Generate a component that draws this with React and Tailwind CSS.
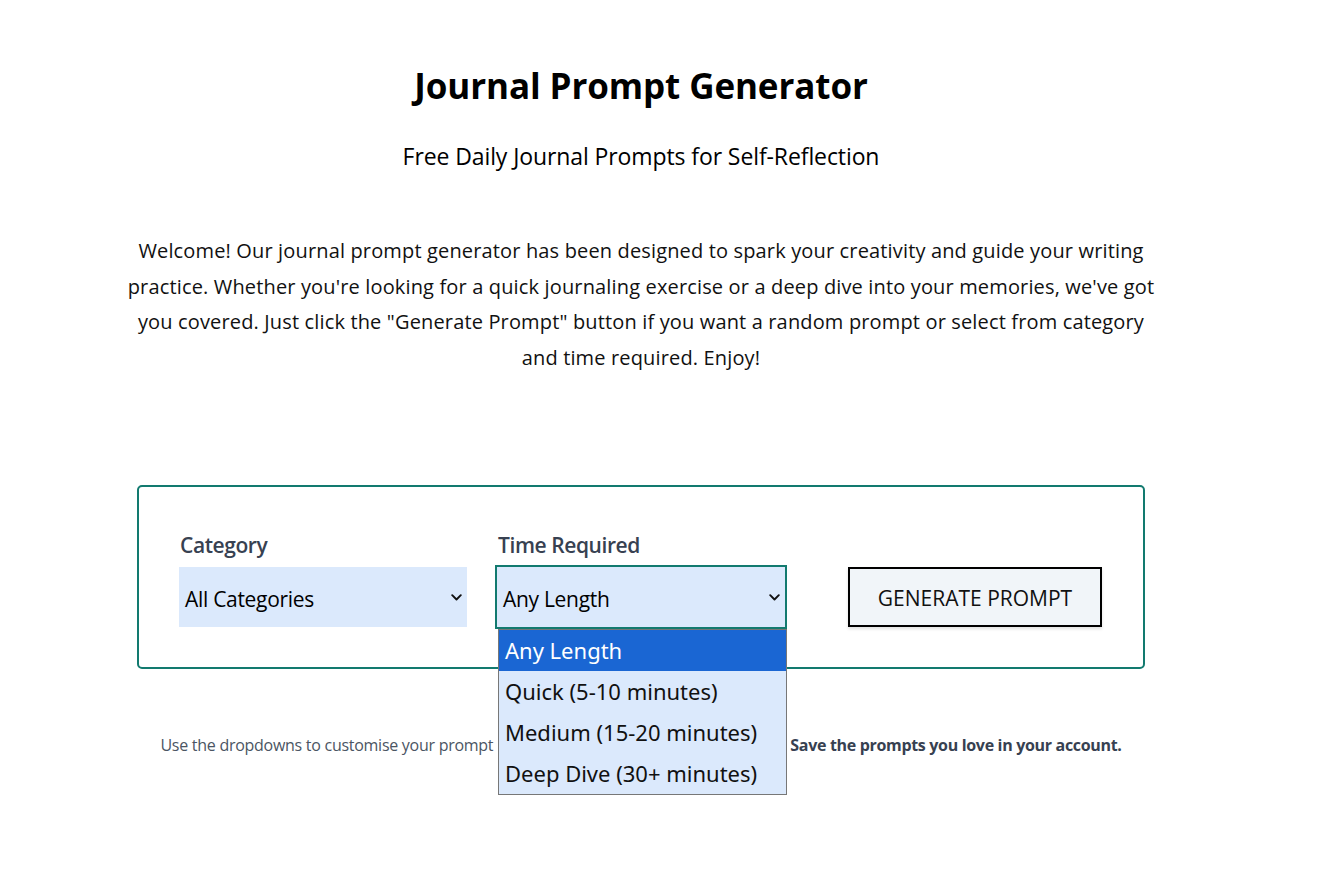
import React from "react";

function Chevron() {
  return (
    <svg width="11" height="7" viewBox="0 0 11 7" fill="none" className="shrink-0">
      <path d="M1.2 1.2 L5.5 5.5 L9.8 1.2" stroke="#111" strokeWidth="1.9" strokeLinecap="round" strokeLinejoin="round" />
    </svg>
  );
}

export default function App() {
  const options = ["Any Length", "Quick (5-10 minutes)", "Medium (15-20 minutes)", "Deep Dive (30+ minutes)"];
  return (
    <div className="min-h-screen bg-white text-black font-['Open_Sans',sans-serif]">
      <div className="w-[1050px] ml-[116px] flex flex-col items-center">
        <h1 className="mt-[62px] text-[35px] leading-[48px] font-bold tracking-[-0.1px]">Journal Prompt Generator</h1>
        <p className="mt-[31px] text-[23px] leading-[30px] tracking-[-0.1px]">Free Daily Journal Prompts for Self-Reflection</p>
        <p className="mt-[62px] text-[20px] leading-[35.5px] text-center whitespace-nowrap tracking-[0.15px] text-[#111]">
          Welcome! Our journal prompt generator has been designed to spark your creativity and guide your writing
          <br />
          practice. Whether you're looking for a quick journaling exercise or a deep dive into your memories, we've got
          <br />
          you covered. Just click the "Generate Prompt" button if you want a random prompt or select from category
          <br />
          and time required. Enjoy!
        </p>

        <div className="mt-[110px] w-[1008px] h-[184px] border-2 border-[#127a6f] rounded-[5px] flex items-end pl-[38px] pr-[40px] pb-[38px]">
          <div className="flex flex-col w-[292px]">
            <label className="pl-[3px] text-[21px] leading-[28px] font-semibold text-[#374151] tracking-[-0.02em]">Category</label>
            <div className="mt-[6px] h-[64px] border-2 border-white bg-[#dbe9fc] flex items-center justify-between pl-[6px] pr-[5px] pt-[5px]">
              <span className="text-[21px] tracking-[-0.3px]">All Categories</span>
              <span className="-mt-[5px]"><Chevron /></span>
            </div>
          </div>

          <div className="ml-[26px] flex flex-col w-[292px]">
            <label className="pl-[3px] text-[21px] leading-[28px] font-semibold text-[#374151] tracking-[-0.02em]">Time Required</label>
            <div className="relative mt-[6px]">
              <div className="h-[64px] border-2 border-[#127a6f] bg-[#dbe9fc] flex items-center justify-between pl-[6px] pr-[5px] pt-[5px]">
                <span className="text-[21px] tracking-[-0.3px]">Any Length</span>
                <span className="-mt-[5px]"><Chevron /></span>
              </div>
              <ul className="absolute top-full left-[3px] w-[289px] border border-[#777] bg-[#dbe9fc] z-10 font-['Noto_Sans',sans-serif]">
                {options.map((o, i) => (
                  <li
                    key={o}
                    className={
                      i === 0
                        ? "h-[41px] flex items-center pl-[6px] text-[22px] bg-[#1a66d3] text-white"
                        : "h-[41px] flex items-center pl-[6px] text-[22px] text-[#111]"
                    }
                  >
                    {o}
                  </li>
                ))}
              </ul>
            </div>
          </div>

          <button className="ml-[61px] mb-[2px] w-[254px] h-[60px] border-2 border-black bg-[#f1f5f9] shadow-[0_2px_3px_rgba(0,0,0,0.12)] text-[21px] text-[#111] pt-[3px]">
            GENERATE PROMPT
          </button>
        </div>

        <div className="mt-[64px] flex items-center whitespace-nowrap text-[16px] leading-[24px]">
          <span className="text-[#4b5563] tracking-[-0.27px]">Use the dropdowns to customise your prompt</span>
          <span className="w-[297px] shrink-0" aria-hidden="true"></span>
          <span className="font-bold text-[#374151] tracking-[-0.32px]">Save the prompts you love in your account.</span>
        </div>
      </div>
    </div>
  );
}
